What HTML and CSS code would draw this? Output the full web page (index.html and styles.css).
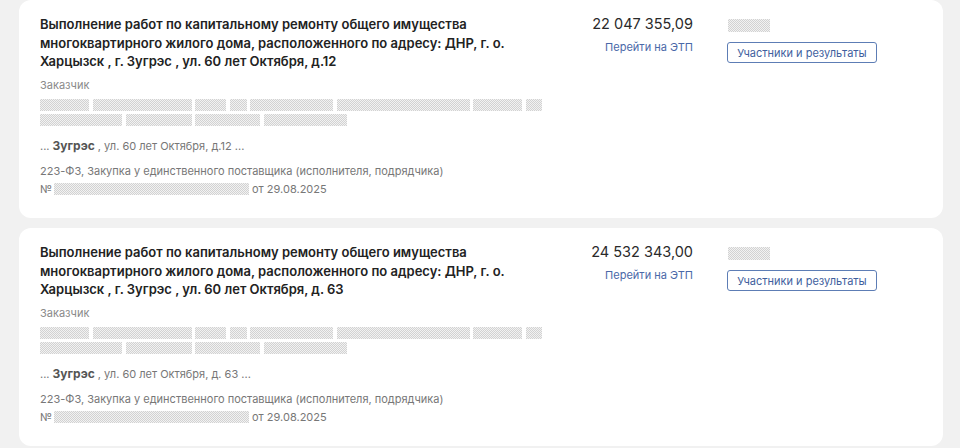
FILE: index.html
```html
<!DOCTYPE html>
<html lang="ru">
<head>
<meta charset="utf-8">
<link rel="stylesheet" href="styles.css">
</head>
<body>
<div class="list">
  <div class="card">
    <div class="main">
      <div class="title">Выполнение работ по капитальному ремонту общего имущества многоквартирного жилого дома, расположенного по адресу: ДНР, г. о. Харцызск , г. Зугрэс , ул. 60 лет Октября, д.12</div>
      <div class="label">Заказчик</div>
      <div class="redacted">
        <span class="r" style="width:49px"></span><span class="r" style="width:99px"></span><span class="r" style="width:31px"></span><span class="r" style="width:17px"></span><span class="r" style="width:83px"></span><span class="r" style="width:133px"></span><span class="r" style="width:49px"></span><span class="r" style="width:16px"></span><span class="r" style="width:82px"></span><span class="r" style="width:66px"></span><span class="r" style="width:65px"></span><span class="r" style="width:83px"></span>
      </div>
      <div class="addr">... <b>Зугрэс</b> , ул. 60 лет Октября, д.12 ...</div>
      <div class="proc">223-ФЗ, Закупка у единственного поставщика (исполнителя, подрядчика)</div>
      <div class="num">№ <span class="r num-r"></span> от 29.08.2025</div>
    </div>
    <div class="price">
      <div class="sum">22 047 355,09</div>
      <a class="etp" href="#">Перейти на ЭТП</a>
    </div>
    <div class="side">
      <span class="r side-r"></span>
      <button class="btn">Участники и результаты</button>
    </div>
  </div>
  <div class="card">
    <div class="main">
      <div class="title">Выполнение работ по капитальному ремонту общего имущества многоквартирного жилого дома, расположенного по адресу: ДНР, г. о. Харцызск , г. Зугрэс , ул. 60 лет Октября, д. 63</div>
      <div class="label">Заказчик</div>
      <div class="redacted">
        <span class="r" style="width:49px"></span><span class="r" style="width:99px"></span><span class="r" style="width:31px"></span><span class="r" style="width:17px"></span><span class="r" style="width:83px"></span><span class="r" style="width:133px"></span><span class="r" style="width:49px"></span><span class="r" style="width:16px"></span><span class="r" style="width:82px"></span><span class="r" style="width:66px"></span><span class="r" style="width:65px"></span><span class="r" style="width:83px"></span>
      </div>
      <div class="addr">... <b>Зугрэс</b> , ул. 60 лет Октября, д. 63 ...</div>
      <div class="proc">223-ФЗ, Закупка у единственного поставщика (исполнителя, подрядчика)</div>
      <div class="num">№ <span class="r num-r"></span> от 29.08.2025</div>
    </div>
    <div class="price">
      <div class="sum">24 532 343,00</div>
      <a class="etp" href="#">Перейти на ЭТП</a>
    </div>
    <div class="side">
      <span class="r side-r"></span>
      <button class="btn">Участники и результаты</button>
    </div>
  </div>
</div>
</body>
</html>
```
FILE: styles.css
```css
html, body {
  margin: 0;
  padding: 0;
  background: #f1f1f1;
  font-family: Inter, "Noto Sans", "Liberation Sans", sans-serif;
  color: #222;
}
.list {
  padding: 0 17px 0 19px;
  display: flex;
  flex-direction: column;
  gap: 10px;
}
.card {
  background: #fff;
  border-radius: 12px;
  height: 218px;
  box-sizing: border-box;
  padding: 15px 21px 0 21px;
  display: flex;
}
.main {
  width: 510px;
  flex: none;
}
.title {
  font-size: 13px;
  font-weight: 600;
  line-height: 18.5px;
  color: #222;
}
.label {
  margin-top: 7px;
  font-size: 11px;
  line-height: 15px;
  color: #8a8a8a;
}
.r {
  display: inline-block;
  height: 12px;
  background: repeating-conic-gradient(#d2d2d2 0 25%, #f2f2f2 0 50%) 0 0 / 2px 2px;
}
.redacted {
  margin-top: 6px;
  display: flex;
  flex-wrap: wrap;
  column-gap: 3.5px;
  row-gap: 3px;
}
.addr {
  margin-top: 12px;
  font-size: 11px;
  line-height: 15px;
  color: #777;
}
.addr b {
  font-size: 12px;
  font-weight: 700;
  color: #555;
}
.proc {
  margin-top: 8px;
  font-size: 11px;
  line-height: 18px;
  color: #777;
}
.num {
  font-size: 11px;
  line-height: 18px;
  color: #777;
  display: flex;
  align-items: center;
}
.num-r {
  width: 195px;
  margin: 0 3px 0 2px;
}
.price {
  width: 143px;
  flex: none;
  display: flex;
  flex-direction: column;
  align-items: flex-end;
}
.sum {
  font-size: 14.5px;
  line-height: 19px;
  color: #2a2a2a;
  margin-top: -1px;
}
.etp {
  margin-top: 7px;
  font-size: 11px;
  line-height: 14px;
  color: #4a68a8;
  text-decoration: none;
}
.side {
  margin-left: 34px;
  display: flex;
  flex-direction: column;
  align-items: flex-start;
}
.side-r {
  width: 42px;
  height: 13px;
  margin-top: 4px;
  margin-left: 1px;
}
.btn {
  margin-top: 10px;
  height: 21px;
  width: 150px;
  padding: 0;
  border: 1px solid #5d7db5;
  border-radius: 3px;
  background: #fff;
  color: #3f5f9e;
  font-family: inherit;
  font-size: 11px;
}
```
